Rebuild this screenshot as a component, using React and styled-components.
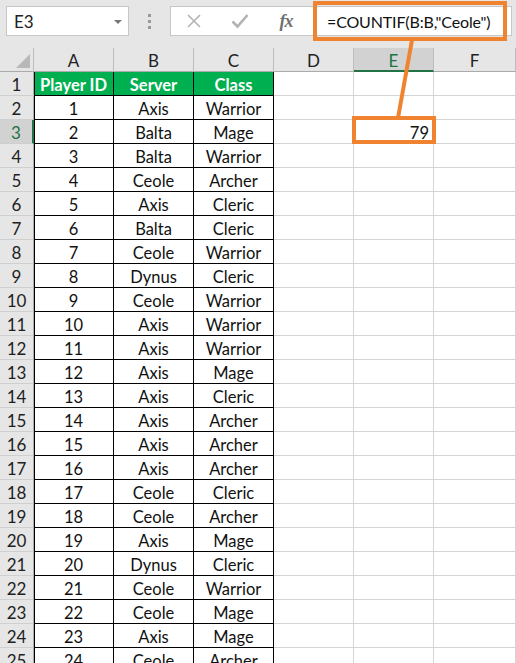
import React from "react";
import styled, { createGlobalStyle } from "styled-components";

const Global = createGlobalStyle`
  html, body { margin: 0; padding: 0; background: #fff; }
  body { overflow: hidden; }
  * { box-sizing: border-box; }
`;

const ORANGE = "#f0832f";
const GREEN = "#217346";
const FONT = `Lato, "Open Sans", sans-serif`;

const Page = styled.div`
  position: relative;
  width: 516px;
  height: 663px;
  overflow: hidden;
  background: #fff;
  font-family: ${FONT};
`;

const TopBar = styled.div`
  display: flex;
  align-items: flex-start;
  height: 48px;
  padding: 6px 0 0 6px;
  background: #e6e6e6;
`;

const NameBox = styled.div`
  position: relative;
  display: flex;
  align-items: center;
  justify-content: space-between;
  width: 123px;
  height: 30px;
  padding: 0 6px 0 7px;
  background: #fff;
  border: 1px solid #c6c6c6;
  font-size: 17px;
  color: #222;
`;

const Caret = styled.span`
  width: 0;
  height: 0;
  border-left: 4px solid transparent;
  border-right: 4px solid transparent;
  border-top: 4px solid #777;
  margin-top: 2px;
`;

const Dots = styled.div`
  display: flex;
  flex-direction: column;
  align-items: center;
  gap: 3px;
  width: 41px;
  padding-top: 8px;
`;

const Dot = styled.span`
  width: 3px;
  height: 3px;
  background: #9a9a9a;
`;

const FormulaBox = styled.div`
  display: flex;
  align-items: center;
  width: 342px;
  height: 30px;
  background: #fff;
  border: 1px solid #c6c6c6;
`;

const IconSlot = styled.div`
  display: flex;
  align-items: center;
  justify-content: center;
  width: 46px;
  height: 100%;
`;

const Fx = styled.span`
  font-family: "Liberation Serif", "DejaVu Serif", serif;
  font-style: italic;
  font-weight: bold;
  font-size: 18px;
  color: #707070;
  letter-spacing: -1px;
`;

const FormulaText = styled.div`
  padding-left: 18px;
  font-size: 16px;
  letter-spacing: -0.15px;
  color: #111;
  white-space: nowrap;
`;

const Sheet = styled.div`
  display: grid;
  grid-template-columns: 34px repeat(5, 80px) 82px;
  grid-auto-rows: 24px;
`;

const Cell = styled.div`
  display: flex;
  align-items: center;
  justify-content: center;
  padding-top: 2px;
  font-size: 16.5px;
  color: #111;
  white-space: nowrap;
  border-right: 1px solid ${(p) => (p.$table ? "#000" : "#d4d4d4")};
  border-bottom: 1px solid ${(p) => (p.$table ? "#000" : "#d4d4d4")};
  background: ${(p) => (p.$head ? "#00b050" : "#fff")};
  font-weight: ${(p) => (p.$head ? 700 : 400)};
  ${(p) => p.$head && "color: #fff;"}
  ${(p) => p.$first && "box-shadow: inset 1px 0 0 #000;"}
  ${(p) => p.$right && "justify-content: flex-end; padding-right: 4px;"}
`;

const ColHead = styled.div`
  display: flex;
  align-items: center;
  justify-content: center;
  padding-top: 2px;
  font-size: 17px;
  color: ${(p) => (p.$sel ? GREEN : "#222")};
  background: ${(p) => (p.$sel ? "#d2d2d2" : "#e6e6e6")};
  border-right: 1px solid #bdbdbd;
  border-bottom: ${(p) => (p.$sel ? `2px solid ${GREEN}` : "1px solid #ababab")};
`;

const Corner = styled.div`
  position: relative;
  background: #e6e6e6;
  border-right: 1px solid #bdbdbd;
  border-bottom: 1px solid #ababab;
  &::after {
    content: "";
    position: absolute;
    right: 3px;
    bottom: 3px;
    width: 14px;
    height: 14px;
    background: #b8b8b8;
    clip-path: polygon(100% 0, 100% 100%, 0 100%);
  }
`;

const RowHead = styled.div`
  display: flex;
  align-items: center;
  justify-content: center;
  padding-top: 2px;
  font-size: 17px;
  color: ${(p) => (p.$sel ? GREEN : "#222")};
  background: ${(p) => (p.$sel ? "#d2d2d2" : "#e6e6e6")};
  border-right: ${(p) => (p.$sel ? `2px solid ${GREEN}` : "1px solid #ababab")};
  border-bottom: 1px solid #cfcfcf;
`;

const Highlight = styled.div`
  position: absolute;
  border: 4px solid ${ORANGE};
  pointer-events: none;
`;

const Connector = styled.svg`
  position: absolute;
  left: 0;
  top: 0;
  pointer-events: none;
`;

const data = [
  ["Axis", "Warrior"], ["Balta", "Mage"], ["Balta", "Warrior"], ["Ceole", "Archer"],
  ["Axis", "Cleric"], ["Balta", "Cleric"], ["Ceole", "Warrior"], ["Dynus", "Cleric"],
  ["Ceole", "Warrior"], ["Axis", "Warrior"], ["Axis", "Warrior"], ["Axis", "Mage"],
  ["Axis", "Cleric"], ["Axis", "Archer"], ["Axis", "Archer"], ["Axis", "Archer"],
  ["Ceole", "Cleric"], ["Ceole", "Archer"], ["Axis", "Mage"], ["Dynus", "Cleric"],
  ["Ceole", "Warrior"], ["Ceole", "Mage"], ["Axis", "Mage"], ["Ceole", "Archer"],
];

const cols = ["A", "B", "C", "D", "E", "F"];

export default function App() {
  const rows = [["Player ID", "Server", "Class"], ...data.map((d, i) => [String(i + 1), ...d])];
  return (
    <Page>
      <Global />
      <TopBar>
        <NameBox>
          E3
          <Caret />
        </NameBox>
        <Dots>
          <Dot />
          <Dot />
          <Dot />
        </Dots>
        <FormulaBox>
          <IconSlot>
            <svg width="16" height="16" viewBox="0 0 16 16">
              <path d="M2 2 L14 14 M14 2 L2 14" stroke="#b3b3b3" strokeWidth="1.6" fill="none" />
            </svg>
          </IconSlot>
          <IconSlot>
            <svg width="18" height="16" viewBox="0 0 18 16">
              <path d="M1.5 8.5 L6.5 13.5 L16.5 2" stroke="#b3b3b3" strokeWidth="2.6" fill="none" />
            </svg>
          </IconSlot>
          <IconSlot>
            <Fx>fx</Fx>
          </IconSlot>
          <FormulaText>=COUNTIF(B:B,"Ceole")</FormulaText>
        </FormulaBox>
      </TopBar>
      <Sheet>
        <Corner />
        {cols.map((c) => (
          <ColHead key={c} $sel={c === "E"}>{c}</ColHead>
        ))}
        {rows.map((r, i) => (
          <React.Fragment key={i}>
            <RowHead $sel={i === 2}>{i + 1}</RowHead>
            {r.map((v, j) => (
              <Cell key={j} $table $head={i === 0} $first={j === 0}>{v}</Cell>
            ))}
            <Cell />
            <Cell $right>{i === 2 ? "79" : ""}</Cell>
            <Cell />
          </React.Fragment>
        ))}
      </Sheet>
      <Connector width="516" height="663">
        <line x1="412" y1="40" x2="398" y2="118" stroke={ORANGE} strokeWidth="4" />
      </Connector>
      <Highlight style={{ left: 313, top: 1, width: 194, height: 40 }} />
      <Highlight style={{ left: 352, top: 116, width: 84, height: 28 }} />
    </Page>
  );
}
